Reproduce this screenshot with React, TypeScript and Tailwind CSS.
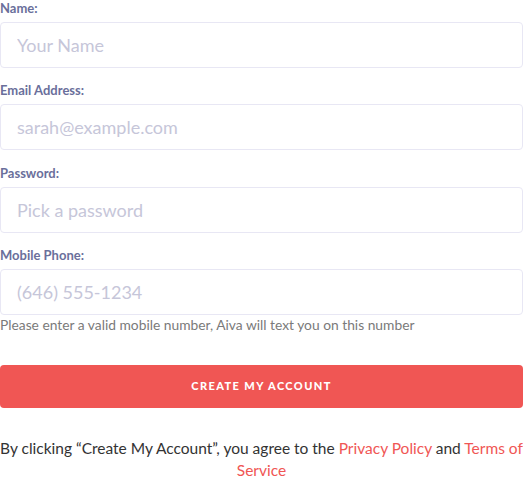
import React from "react";

export default function App() {
  const fields = [
    { label: "Name:", placeholder: "Your Name", type: "text", gap: "" },
    { label: "Email Address:", placeholder: "sarah@example.com", type: "email", gap: "mt-[14px]" },
    { label: "Password:", placeholder: "Pick a password", type: "password", gap: "mt-[15px]" },
    { label: "Mobile Phone:", placeholder: "(646) 555-1234", type: "tel", gap: "mt-[14px]" },
  ];

  return (
    <div className="w-[523px] bg-white font-['Lato',sans-serif]">
      <form className="flex flex-col" onSubmit={(e) => e.preventDefault()}>
        {fields.map((f) => (
          <div key={f.label} className={f.gap}>
            <label className="block h-[22px] text-[13px] font-bold leading-[17px] text-[#6a6f9b]">
              {f.label}
            </label>
            <input
              type={f.type}
              placeholder={f.placeholder}
              className="block h-[46px] w-[523px] rounded-[4px] border border-[#e8e7f4] px-[16px] text-[18px] text-[#333] outline-none placeholder:text-[#c6c6d9]"
            />
          </div>
        ))}
        <p className="mt-[1px] text-[13.8px] leading-[18px] text-[#7a7a7a]">
          Please enter a valid mobile number, Aiva will text you on this number
        </p>
        <button
          type="submit"
          className="mt-[31px] h-[43px] w-full rounded-[4px] bg-[#f05654] text-[11px] font-black uppercase tracking-[1.4px] text-white"
        >
          Create My Account
        </button>
        <p className="mt-[29px] text-center text-[15.5px] leading-[22px] text-[#333]">
          By clicking “Create My Account”, you agree to the{" "}
          <a className="text-[#f05654]">Privacy Policy</a> and{" "}
          <a className="text-[#f05654]">Terms of Service</a>
        </p>
      </form>
    </div>
  );
}
